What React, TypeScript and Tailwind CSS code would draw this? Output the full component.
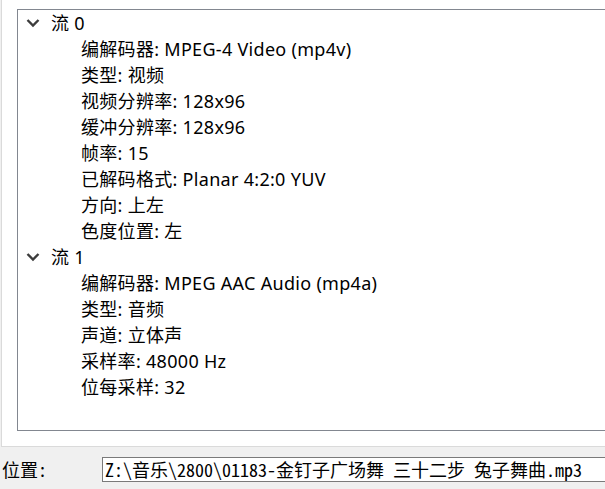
import React from 'react'

interface Stream {
  title: string
  props: string[]
}

const streams: Stream[] = [
  {
    title: '流 0',
    props: [
      '编解码器: MPEG-4 Video (mp4v)',
      '类型: 视频',
      '视频分辨率: 128x96',
      '缓冲分辨率: 128x96',
      '帧率: 15',
      '已解码格式: Planar 4:2:0 YUV',
      '方向: 上左',
      '色度位置: 左',
    ],
  },
  {
    title: '流 1',
    props: [
      '编解码器: MPEG AAC Audio (mp4a)',
      '类型: 音频',
      '声道: 立体声',
      '采样率: 48000 Hz',
      '位每采样: 32',
    ],
  },
]

const Chevron = () => (
  <svg width="14" height="10" viewBox="0 0 14 10" className="shrink-0">
    <path d="M1.5 2 L7 7.5 L12.5 2" fill="none" stroke="#3c3c3c" strokeWidth="2.4" />
  </svg>
)

const uiFont = { fontFamily: '"Segoe UI", "Noto Sans", "Noto Sans CJK SC", sans-serif' }
const monoFont = {
  fontFamily: '"Noto Sans Mono CJK SC", "Liberation Mono", "Noto Sans CJK SC", monospace',
}

export default function App() {
  return (
    <div className="w-[605px] h-[489px] bg-[#f0f0f0] overflow-hidden flex flex-col">
      {/* properties panel */}
      <div className="h-[447px] bg-white border-l border-b border-[#dadada] ml-[1px] pt-[9px] pl-[15px]">
        <div
          className="h-[422px] border-t border-l border-b border-[#828790] text-[18px] text-black leading-[26px] tracking-[0.3px]"
          style={uiFont}
        >
          {streams.map((s) => (
            <div key={s.title}>
              <div className="flex items-center h-[26px] pl-[8px] gap-[11px]">
                <Chevron />
                <span>{s.title}</span>
              </div>
              {s.props.map((p) => (
                <div key={p} className="h-[26px] pl-[63px] whitespace-nowrap">
                  {p}
                </div>
              ))}
            </div>
          ))}
        </div>
      </div>

      {/* location row */}
      <div className="flex items-center mt-[10px] h-[25px]" style={monoFont}>
        <span className="w-[102px] pl-[2px] text-[18px] text-black">位置:</span>
        <div className="flex-1 h-[25px] bg-white border border-[#7a7a7a] border-r-0 pl-[2px] flex items-center text-[18px] text-black whitespace-nowrap overflow-hidden">
          Z:\音乐\2800\01183-金钉子广场舞 三十二步 兔子舞曲.mp3
        </div>
      </div>
    </div>
  )
}
